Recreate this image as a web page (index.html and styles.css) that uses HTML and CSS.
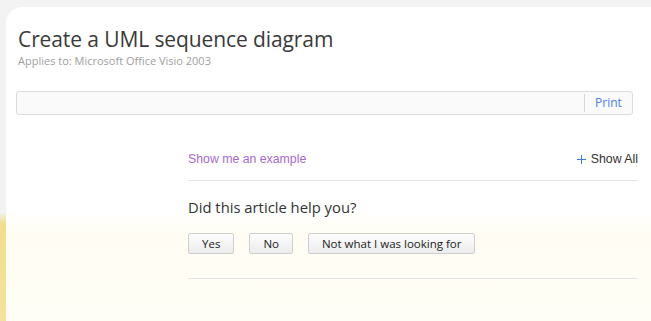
FILE: index.html
```html
<!DOCTYPE html>
<html lang="en">
  <head>
    <meta charset="UTF-8" />
    <title>Create a UML sequence diagram</title>
    <link rel="stylesheet" href="styles.css">
  </head>
  <body>
    <div class="page">
      <div class="card">
        <div class="article-head">
          <h1>Create a UML sequence diagram</h1>
          <div class="applies">Applies to: Microsoft Office Visio 2003</div>
        </div>

        <div class="toolbar">
          <div class="toolbar-fill"></div>
          <a href="#" class="print">Print</a>
        </div>

        <div class="main">
          <div class="side"></div>
          <div class="content">
            <div class="links-row">
              <a href="#" class="example">Show me an example</a>
              <a href="#" class="show-all">
                <svg class="plus" width="9" height="9" viewBox="0 0 9 9">
                  <path d="M4.5 0v9M0 4.5h9" stroke="#3c7ae0" stroke-width="1" fill="none" />
                </svg>
                Show All
              </a>
            </div>
            <div class="feedback">
              <h2>Did this article help you?</h2>
              <div class="buttons">
                <button>Yes</button>
                <button>No</button>
                <button>Not what I was looking for</button>
              </div>
            </div>
          </div>
        </div>
      </div>
    </div>
  </body>
</html>
```

FILE: styles.css
```css
body {
  margin: 0;
  height: 321px;
  overflow: hidden;
  background: linear-gradient(to bottom, #f3f3f3 0, #f3f3f3 212px, #f1de8c 224px, #f3e39c 321px);
  font-family: "Open Sans", "Noto Sans", sans-serif;
}
.page {
  padding: 7px 0 0 6px;
  height: 100%;
  box-sizing: border-box;
}
.card {
  height: 100%;
  background: linear-gradient(to bottom, #ffffff 0, #ffffff 205px, #fffdf3 228px, #fffef6 321px);
  border-top-left-radius: 16px;
  padding: 0 13px 0 10px;
  box-sizing: border-box;
}
.article-head {
  padding: 17px 0 0 2px;
}
h1 {
  margin: 0;
  font-size: 21px;
  font-weight: normal;
  color: #3a3a3a;
  line-height: 30px;
  letter-spacing: -0.1px;
}
.applies {
  font-size: 11px;
  color: #a0a0a0;
  line-height: 13px;
}
.toolbar {
  display: flex;
  margin: 24px 5px 0 0;
  height: 22px;
  border: 1px solid #dcdcdc;
  border-radius: 3px;
  background: #fafafa;
}
.toolbar-fill {
  flex: 1;
  border-right: 1px solid #d6d6d6;
  margin: 2px 0;
}
.print {
  width: 47px;
  text-align: center;
  font-size: 12px;
  line-height: 22px;
  color: #4a7fe3;
  text-decoration: none;
}
.main {
  display: grid;
  grid-template-columns: 172px 1fr;
}
.content {
  padding-top: 36px;
}
.links-row {
  display: flex;
  justify-content: space-between;
  align-items: center;
  font-family: "Liberation Sans", Arial, sans-serif;
  font-size: 12.3px;
  line-height: 17px;
  padding-bottom: 12px;
  border-bottom: 1px solid #e5e5e5;
}
.example {
  color: #a86ad0;
  text-decoration: none;
}
.show-all {
  display: flex;
  align-items: center;
  gap: 5px;
  color: #333;
  text-decoration: none;
}
.feedback {
  padding: 16px 0 24px;
  border-bottom: 1px solid #e5e5e5;
}
h2 {
  margin: 0;
  font-size: 14.8px;
  font-weight: normal;
  color: #333;
  line-height: 20px;
}
.buttons {
  display: flex;
  gap: 15px;
  margin-top: 16px;
}
button {
  font-family: "Open Sans", "Noto Sans", sans-serif;
  font-size: 11.5px;
  color: #222;
  height: 21px;
  padding: 0 13px;
  border: 1px solid #cfcfcf;
  border-radius: 2px;
  background: linear-gradient(to bottom, #fdfdfd, #ececec);
}
```
